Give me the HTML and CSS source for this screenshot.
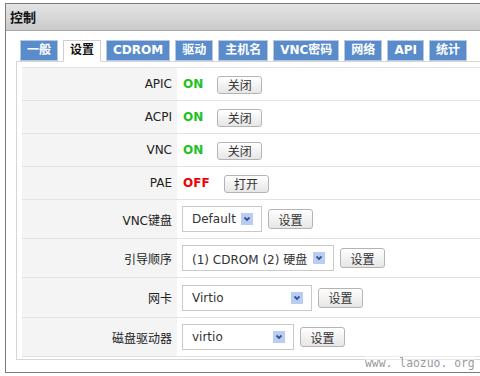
FILE: index.html
```html
<!DOCTYPE html>
<html>
<head>
<meta charset="utf-8">
<link rel="stylesheet" href="styles.css">
</head>
<body>
<div class="panel">
  <div class="panel-header">控制</div>
  <div class="panel-body">
    <div class="tabs">
      <div class="tab">一般</div>
      <div class="tab active">设置</div>
      <div class="tab">CDROM</div>
      <div class="tab">驱动</div>
      <div class="tab">主机名</div>
      <div class="tab">VNC密码</div>
      <div class="tab">网络</div>
      <div class="tab">API</div>
      <div class="tab">统计</div>
    </div>
    <div class="tab-panel">
      <div class="grid">
        <div class="row">
          <div class="label">APIC</div>
          <div class="value"><span class="status on">ON</span><span class="btn">关闭</span></div>
        </div>
        <div class="row">
          <div class="label">ACPI</div>
          <div class="value"><span class="status on">ON</span><span class="btn">关闭</span></div>
        </div>
        <div class="row">
          <div class="label">VNC</div>
          <div class="value"><span class="status on">ON</span><span class="btn">关闭</span></div>
        </div>
        <div class="row">
          <div class="label">PAE</div>
          <div class="value"><span class="status off">OFF</span><span class="btn">打开</span></div>
        </div>
        <div class="row tall">
          <div class="label">VNC键盘</div>
          <div class="value"><span class="select w80"><span class="sel-text">Default</span><svg class="arrow" width="12" height="12" viewBox="0 0 12 12"><rect width="12" height="12" fill="#b9ccf3"/><polyline points="3.5,4.5 6,7 8.5,4.5" fill="none" stroke="#35548f" stroke-width="1.8"/></svg></span><span class="btn btn-set">设置</span></div>
        </div>
        <div class="row tall">
          <div class="label">引导顺序</div>
          <div class="value"><span class="select w152"><span class="sel-text">(1) CDROM (2) 硬盘</span><svg class="arrow" width="12" height="12" viewBox="0 0 12 12"><rect width="12" height="12" fill="#b9ccf3"/><polyline points="3.5,4.5 6,7 8.5,4.5" fill="none" stroke="#35548f" stroke-width="1.8"/></svg></span><span class="btn btn-set">设置</span></div>
        </div>
        <div class="row tall40">
          <div class="label">网卡</div>
          <div class="value"><span class="select w130"><span class="sel-text">Virtio</span><svg class="arrow" width="12" height="12" viewBox="0 0 12 12"><rect width="12" height="12" fill="#b9ccf3"/><polyline points="3.5,4.5 6,7 8.5,4.5" fill="none" stroke="#35548f" stroke-width="1.8"/></svg></span><span class="btn btn-set">设置</span></div>
        </div>
        <div class="row tall">
          <div class="label">磁盘驱动器</div>
          <div class="value"><span class="select w112"><span class="sel-text">virtio</span><svg class="arrow" width="12" height="12" viewBox="0 0 12 12"><rect width="12" height="12" fill="#b9ccf3"/><polyline points="3.5,4.5 6,7 8.5,4.5" fill="none" stroke="#35548f" stroke-width="1.8"/></svg></span><span class="btn btn-set">设置</span></div>
        </div>
      </div>
    </div>
  </div>
</div>
<div class="watermark">www. laozuo. org</div>
</body>
</html>
```
FILE: styles.css
```css
html, body {
  margin: 0;
  padding: 0;
  width: 480px;
  height: 376px;
  overflow: hidden;
  background: #fff;
  font-family: "DejaVu Sans", "Noto Sans CJK SC", sans-serif;
  font-size: 12px;
  color: #222;
}

.panel {
  margin: 3px 0 0 5px;
  width: 520px;
  height: 370px;
  box-sizing: border-box;
  border: 1px solid #7b7b7b;
}

.panel-header {
  height: 26px;
  border-bottom: 1px solid #a9a9a9;
  background: linear-gradient(#e4e4e4, #cbcbcb);
  font-family: "Noto Sans CJK SC", sans-serif;
  font-weight: bold;
  font-size: 13px;
  line-height: 26px;
  padding-left: 4px;
  color: #111;
}

.panel-body {
  padding: 9px 0 0 10px;
}

.tabs {
  display: flex;
  padding-left: 4px;
  height: 21px;
  position: relative;
  z-index: 1;
}

.tab {
  height: 21px;
  box-sizing: border-box;
  padding: 0 6px;
  margin-right: 5px;
  background: #5a8ccb;
  border: 1px solid #b8c8de;
  color: #fff;
  font-weight: bold;
  font-size: 12px;
  line-height: 19px;
}

.tab.active {
  background: #fff;
  color: #111;
  border-color: #cfcfcf;
  border-bottom-color: #fff;
  height: 22px;
}

.tab-panel {
  border: 1px solid #d6d6d6;
  padding: 5px 0 2px 5px;
}

.grid {
  border-bottom: 1px solid #e2e2e2;
}

.row {
  display: grid;
  grid-template-columns: 155px 1fr;
  height: 33px;
  box-sizing: border-box;
  border-top: 1px solid #e2e2e2;
}

.row.tall {
  height: 39px;
}

.row.tall40 {
  height: 40px;
}

.label {
  background: #f4f4f4;
  display: flex;
  align-items: center;
  justify-content: flex-end;
  padding-right: 5px;
  color: #222;
}

.value {
  display: flex;
  align-items: center;
  padding-left: 5px;
}

.status {
  font-weight: bold;
  margin-left: 1px;
  margin-right: 14px;
}

.status.on {
  color: #1ec21e;
}

.status.off {
  color: #f00000;
}

.btn {
  display: inline-flex;
  align-items: center;
  justify-content: center;
  width: 45px;
  height: 18px;
  box-sizing: border-box;
  border: 1px solid #b4b4b4;
  border-radius: 3px;
  background: linear-gradient(#ffffff, #e6e6e6);
  font-family: "Noto Sans CJK SC", sans-serif;
  font-size: 12px;
  color: #333;
  margin-top: 1px;
}

.btn-set {
  height: 20px;
  margin-left: 6px;
  margin-top: 0;
}

.select {
  display: flex;
  align-items: center;
  height: 26px;
  box-sizing: border-box;
  border: 1px solid #c9c9c9;
  background: #fff;
  padding-left: 9px;
  padding-right: 8px;
  color: #333;
}

.sel-text {
  flex: 1;
  white-space: nowrap;
}

.arrow {
  flex: none;
}

.w80 { width: 80px; }
.w152 { width: 152px; }
.w130 { width: 130px; }
.w112 { width: 112px; }

.watermark {
  position: absolute;
  left: 365px;
  top: 356px;
  font-family: "DejaVu Sans Mono", monospace;
  font-size: 11.4px;
  color: #9a9a9a;
  background: rgba(255, 255, 255, 0.4);
}
```
